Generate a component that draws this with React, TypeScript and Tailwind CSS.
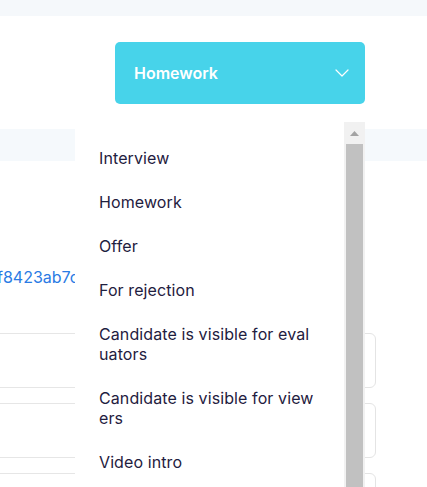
import { ChevronDown } from 'lucide-react';

const options = [
  'Interview',
  'Homework',
  'Offer',
  'For rejection',
  'Candidate is visible for evaluators',
  'Candidate is visible for viewers',
  'Video intro',
  'Rejected',
];

function FieldRow() {
  return (
    <div className="flex h-[55px]">
      <div className="flex-1 border-y border-[#e6e6e6]" />
      <div className="w-[120px] rounded-md border border-[#e4e4e4] mr-[51px]" />
    </div>
  );
}

export default function App() {
  return (
    <div className="relative w-[427px] h-[487px] overflow-hidden bg-white font-['Inter',sans-serif]">
      {/* Page behind the menu */}
      <div className="h-4 bg-[#f5f8fb]" />
      <div className="h-[113px] pt-[26px] pl-[115px]">
        <button className="flex h-[62px] w-[250px] items-center justify-between rounded-[5px] bg-[#47d3ea] pl-[19px] pr-[11px] text-[16px] font-semibold text-white">
          Homework
          <ChevronDown className="h-6 w-6" strokeWidth={1.2} />
        </button>
      </div>
      <div className="h-8 bg-[#f5f9fc]" />
      <div className="h-[106px] pt-[104px] whitespace-nowrap">
        <span className="ml-[-3px] text-[16px] leading-5 text-[#2a7be4]">f8423ab7c9</span>
      </div>
      <div className="flex flex-col gap-[15px] mt-[66px]">
        <FieldRow />
        <FieldRow />
        <FieldRow />
      </div>

      {/* Open dropdown menu */}
      <div className="absolute left-[75px] top-[122px] flex h-[380px] w-[290px] bg-white">
        <ul className="flex-1 pt-[14px] pl-6">
          {options.map((o) => (
            <li
              key={o}
              className="w-[218px] py-3 text-[16px] leading-5 tracking-[0.1px] text-[#1f2040] break-all"
            >
              {o}
            </li>
          ))}
        </ul>
        <div className="flex w-[21px] flex-col bg-[#f1f1f1]">
          <div className="flex h-[22px] items-center justify-center">
            <svg width="9" height="5" viewBox="0 0 9 5">
              <path d="M0 5 L4.5 0 L9 5 Z" fill="#a3a3a3" />
            </svg>
          </div>
          <div className="mx-[2px] flex-1 bg-[#c1c1c1]" />
        </div>
      </div>
    </div>
  );
}
